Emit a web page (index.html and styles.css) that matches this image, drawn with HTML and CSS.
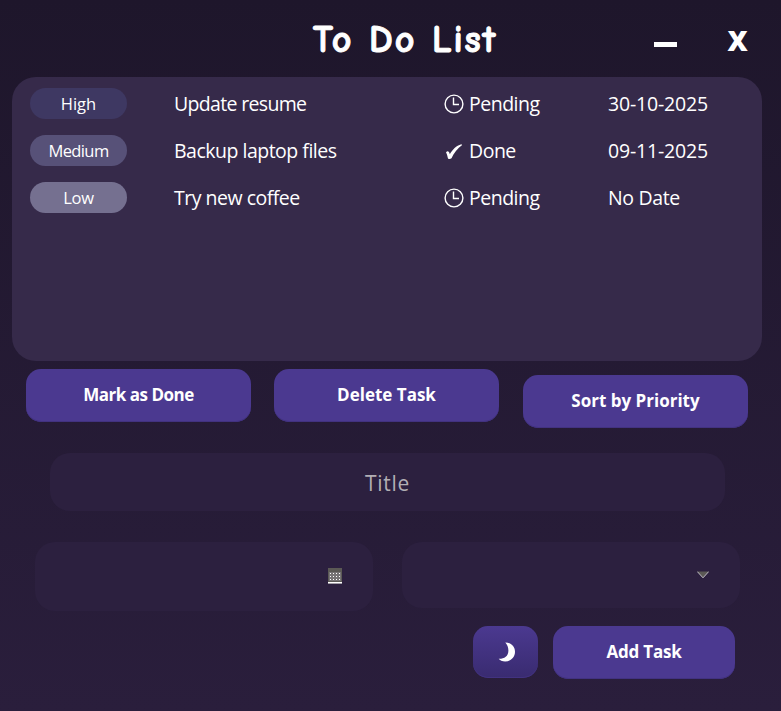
FILE: index.html
```html
<!DOCTYPE html>
<html lang="en">
<head>
<meta charset="utf-8">
<title>To Do List</title>
<link rel="stylesheet" href="styles.css">
</head>
<body>
<main class="app">
  <header class="titlebar">
    <h1 class="heading">To Do List</h1>
    <button class="win minimize" aria-label="Minimize"><svg width="23" height="5" viewBox="0 0 23 5"><path d="M0 0h23v5H0z" fill="#fff"/></svg></button>
    <button class="win close">X</button>
  </header>
  <section class="tasks">
    <div class="task">
      <span class="badge high">High</span><span class="name t1">Update resume</span>
      <span class="status"><svg class="icon" viewBox="0 0 20 20"><circle cx="10" cy="10" r="8.9"/><path d="M9.5 3.5V10.5H15"/></svg><span class="pending">Pending</span></span>
      <span class="date">30-10-2025</span>
    </div>
    <div class="task">
      <span class="badge medium">Medium</span><span class="name t2">Backup laptop files</span>
      <span class="status"><svg class="icon check" viewBox="0 0 20 20"><path d="M2 11.5C3.2 9.8 5 9.7 5.8 13.2C8.5 8.5 12.2 4.6 17.3 3.2L18.2 4C13.5 7.5 9.8 12.4 7.5 17.2C6.5 18.1 4.9 18.2 4 17.4C3.5 15.5 3 13 2 11.5Z"/></svg><span class="done">Done</span></span>
      <span class="date">09-11-2025</span>
    </div>
    <div class="task">
      <span class="badge low">Low</span><span class="name t3">Try new coffee</span>
      <span class="status"><svg class="icon" viewBox="0 0 20 20"><circle cx="10" cy="10" r="8.9"/><path d="M9.5 3.5V10.5H15"/></svg><span class="pending">Pending</span></span>
      <span class="date nodate">No Date</span>
    </div>
  </section>
  <div class="actions">
    <button class="btn b1">Mark as Done</button>
    <button class="btn b2">Delete Task</button>
    <button class="btn sort">Sort by Priority</button>
  </div>
  <div class="field title-field"><span>Title</span></div>
  <div class="row">
    <div class="field date-field">
      <svg width="14" height="16" viewBox="0 0 14 16" shape-rendering="crispEdges"><path d="M0 0h14v16H0z" fill="#5b5955"/><path d="M1 4h12v9H1z" fill="#777476"/><path d="M2 5h1M5 5h1M8 5h1M11 5h1M2 8h1M5 8h1M8 8h1M11 8h1M2 11h1M5 11h1M8 11h1M11 11h1" transform="translate(0 .5)" stroke="#fff"/><path d="M0 14h14v1H0z" fill="#fff"/><path d="M0 15h14v1H0z" fill="#a39fa8"/></svg>
    </div>
    <div class="field select-field">
      <svg width="12" height="8" viewBox="0 0 12 8"><path d="M.5 .5h11L6 6.5Z" fill="#5b5955"/><path d="M.3 .6L6 6.8L11.7 .6" fill="none" stroke="#c6c3c9"/></svg>
    </div>
  </div>
  <footer class="footer">
    <button class="btn moon" aria-label="Theme"><svg width="18" height="20" viewBox="0 0 18 20"><path d="M7.3 .5C13 .5 17 4.5 17 9.8C17 15.5 12.5 19.5 7.2 19.5C4.2 19.5 1.8 18.3 .7 16.8C6 17 10.4 14.5 10.4 8.5C10.4 5.2 9.2 2.5 7.3 .5Z" fill="#fff"/></svg></button>
    <button class="btn add">Add Task</button>
  </footer>
</main>
</body>
</html>
```
FILE: styles.css
```css
* { box-sizing: border-box; }
body { margin: 0; }
button { border: 0; padding: 0; background: none; color: #fff; }
svg { display: block; }

.app {
  width: 781px;
  height: 711px;
  overflow: hidden;
  display: flex;
  flex-direction: column;
  background: linear-gradient(#1e162b, #2a1e3c);
  color: #fff;
  font-family: "Segoe UI", "Open Sans", "Noto Sans", sans-serif;
}

.titlebar {
  height: 77px;
  flex: none;
  display: grid;
  grid-template-columns: 313px 341px 23px 50px 21px;
  align-items: start;
}
.heading {
  grid-column: 2;
  margin: 13px 0 0;
  font: 700 38px/54px "Comic Sans MS", "Comic Neue", Lato, sans-serif;
  letter-spacing: 2px;
  white-space: pre;
  -webkit-text-stroke: 1px #fff;
  stroke-linejoin: round;
}
.minimize { grid-column: 3; margin-top: 42px; }
.close {
  grid-column: 5;
  margin-top: 21px;
  font: 800 28px/38px "Open Sans", sans-serif;
}

.tasks {
  width: 750px;
  height: 284px;
  flex: none;
  margin-left: 12px;
  padding: 3px 18px;
  border-radius: 24px;
  background: #362a4a;
}
.task {
  height: 47px;
  display: grid;
  grid-template-columns: 144px 270px 164px 118px;
  align-items: center;
  font-size: 19.5px;
  line-height: 30px;
  letter-spacing: -0.5px;
  white-space: nowrap;
}
.t1 { letter-spacing: -0.67px; }
.date { letter-spacing: -0.18px; }
.nodate { letter-spacing: -0.35px; }
.badge {
  width: 97px;
  height: 31px;
  border-radius: 16px;
  text-align: center;
  font-size: 16.5px;
  line-height: 31px;
  letter-spacing: 0;
}
.high { background: #3e3862; }
.medium { background: #575178; letter-spacing: -0.6px; }
.low { background: #757090; letter-spacing: -0.3px; }
.status { display: flex; align-items: center; gap: 5px; }
.icon { width: 20px; height: 20px; fill: none; stroke: #fff; stroke-width: 1.4; }
.check { fill: #fff; stroke: none; }

.actions {
  flex: none;
  display: flex;
  gap: 23px;
  padding: 8px 0 0 26px;
  height: 92px;
}
.btn {
  width: 225px;
  height: 52.5px;
  border-radius: 15px;
  background: #4b3990;
  box-shadow: inset 0 -1px #423280;
  font: 700 17px/52px "Trebuchet MS", "Open Sans", sans-serif;
  white-space: nowrap;
}
.b1 { letter-spacing: -0.5px; }
.sort { margin: 6px 0 0 1px; }

.field {
  background: #2c203f;
  border-radius: 20px;
}
.title-field {
  flex: none;
  width: 675px;
  height: 58px;
  margin-left: 50px;
  text-align: center;
  color: #b2aeb4;
  font-size: 21px;
  line-height: 60px;
  letter-spacing: 0.7px;
}
.row {
  flex: none;
  display: flex;
  align-items: flex-start;
  gap: 29px;
  height: 115px;
  padding: 31px 0 0 35px;
}
.date-field, .select-field {
  width: 338px;
  display: flex;
  justify-content: flex-end;
}
.date-field { height: 68.5px; padding: 26px 31px 0 0; }
.select-field { height: 66px; padding: 29px 31px 0 0; }

.footer { display: flex; gap: 15px; padding-left: 473px; }
.moon {
  width: 65px;
  height: 52px;
  display: flex;
  justify-content: center;
  padding: 16px 0 0 3px;
  background: linear-gradient(#4b3990, #392b70);
}
.add { width: 182px; letter-spacing: -0.2px; }
```
